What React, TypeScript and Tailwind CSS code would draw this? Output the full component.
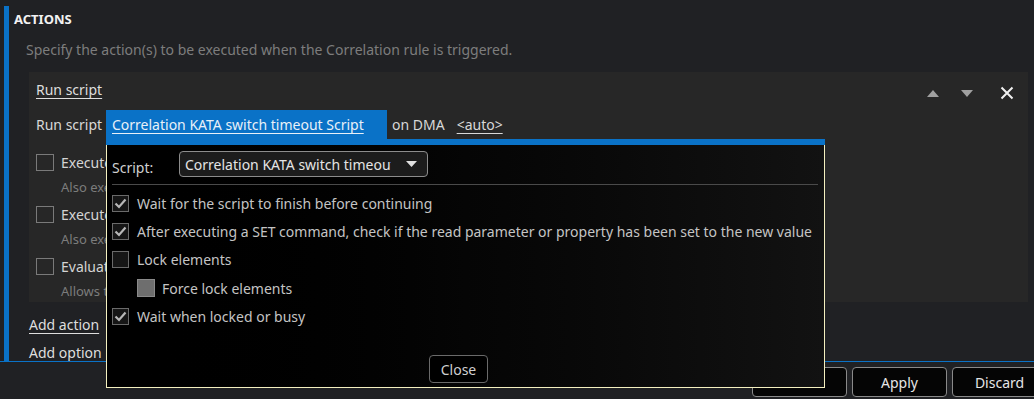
import React from "react";

const font = { fontFamily: '"Noto Sans", "Open Sans", sans-serif' };

function Check({ checked }: { checked?: boolean }) {
  return (
    <div className="w-[17px] h-[17px] border border-[#6a6a6a] bg-[#161616] flex items-center justify-center shrink-0">
      {checked && (
        <svg width="13" height="11" viewBox="0 0 13 11">
          <path d="M1.5 5.5 L5 9 L11.5 1.5" fill="none" stroke="#b8b8b8" strokeWidth="2.2" />
        </svg>
      )}
    </div>
  );
}

function CardCheck({ label, sub }: { label: string; sub: string }) {
  return (
    <div className="flex flex-col">
      <div className="flex items-center h-[17px] gap-[7px]">
        <div className="w-[18px] h-[17px] border border-[#7a7a7a] shrink-0" />
        <span className="text-[#d4d4d4] text-[14px] leading-none">{label}</span>
      </div>
      <div className="pl-[25px] mt-[10px] text-[#7c7c7c] text-[13px] leading-none">{sub}</div>
    </div>
  );
}

function Btn({ children }: { children: React.ReactNode }) {
  return (
    <div className="w-[95px] h-[30px] border border-[#8a8a8a] rounded-[4px] bg-[#050505] text-[#e6e6e6] text-[14px] flex items-center justify-center">
      {children}
    </div>
  );
}

export default function App() {
  return (
    <div className="w-[1034px] h-[399px] bg-[#202124] flex flex-col overflow-hidden" style={font}>
      <div className="h-[361px] pt-[6px] pl-[4px] shrink-0">
        <div className="h-full border-l-[5px] border-[#0a72c7] flex flex-col">
          <div className="pl-[5px] pt-[7px] text-[#f2f2f2] text-[13px] font-bold leading-none">ACTIONS</div>
          <div className="pl-[17px] mt-[17px] text-[#7d7d7d] text-[14px] leading-none">
            Specify the action(s) to be executed when the Correlation rule is triggered.
          </div>
          <div className="ml-[20px] mr-[6px] mt-[15px] h-[236px] bg-[#272727] flex flex-col px-[7px] relative">
            <div className="absolute right-[14px] top-[14px] flex items-center">
              <svg width="12" height="7" viewBox="0 0 12 7" className="mr-[22px]">
                <path d="M0 7 L6 0 L12 7 Z" fill="#a0a0a0" />
              </svg>
              <svg width="12" height="7" viewBox="0 0 12 7" className="mr-[27px]">
                <path d="M0 0 L12 0 L6 7 Z" fill="#a0a0a0" />
              </svg>
              <svg width="14" height="14" viewBox="0 0 14 14">
                <path d="M1.5 1.5 L12.5 12.5 M12.5 1.5 L1.5 12.5" stroke="#f0f0f0" strokeWidth="2" />
              </svg>
            </div>
            <div className="mt-[9px] text-[#dedede] text-[14px] underline underline-offset-[3px] leading-[17px]">Run script</div>
            <div className="mt-[12px] flex items-center h-[29px]">
              <span className="text-[#d8d8d8] text-[14px] w-[70px]">Run script</span>
              <div className="relative w-[281px] h-[29px] bg-[#0a72c7] flex items-center pl-[6px]">
                <span className="text-[#e8f0f8] text-[14px] underline underline-offset-[3px]">Correlation KATA switch timeout Script</span>
                <div className="absolute left-0 top-full w-[719px] z-30 flex flex-col">
                  <div className="h-[6px] bg-[#0a72c7]" />
                  <div className="h-[243px] border-l border-r border-b border-[#f4f0c0] bg-gradient-to-r from-[#000000] via-[#050505] to-[#121212] flex flex-col px-[5px]">
                    <div className="flex items-center mt-[6px] h-[26px]">
                      <span className="text-[#d0d0d0] text-[14px] w-[67px] mt-[6px]">Script:</span>
                      <div className="w-[249px] h-[26px] border border-[#8c8c8c] rounded-[4px] bg-[#1c1c1c] flex items-center pl-[5px] pr-[10px]">
                        <span className="text-[#e4e4e4] text-[14px] w-[206px] overflow-hidden whitespace-nowrap">Correlation KATA switch timeout Script</span>
                        <svg width="11" height="6" viewBox="0 0 11 6" className="ml-auto">
                          <path d="M0 0 L11 0 L5.5 6 Z" fill="#e0e0e0" />
                        </svg>
                      </div>
                    </div>
                    <div className="mt-[7px] h-px bg-[#4a4a4a] mr-[1px]" />
                    <div className="flex flex-col gap-[11px] mt-[10px] text-[#c4c4c4] text-[14px]">
                      <div className="flex items-center gap-[8px] h-[17px]"><Check checked /><span>Wait for the script to finish before continuing</span></div>
                      <div className="flex items-center gap-[8px] h-[17px]"><Check checked /><span>After executing a SET command, check if the read parameter or property has been set to the new value</span></div>
                      <div className="flex items-center gap-[8px] h-[17px]"><Check /><span>Lock elements</span></div>
                      <div className="flex items-center gap-[7px] h-[18px] pl-[25px]">
                        <div className="w-[18px] h-[18px] border border-[#8a8a8a] bg-[#6e6e6e]" />
                        <span>Force lock elements</span>
                      </div>
                      <div className="flex items-center gap-[8px] h-[17px]"><Check checked /><span>Wait when locked or busy</span></div>
                    </div>
                    <div className="mt-auto mb-[4px] flex justify-center pr-[14px]">
                      <div className="w-[59px] h-[28px] border border-[#6a6a6a] rounded-[4px] bg-black text-[#cfcfcf] text-[14px] flex items-center justify-center">Close</div>
                    </div>
                  </div>
                </div>
              </div>
              <span className="ml-[5px] text-[#d8d8d8] text-[14px]">on DMA</span>
              <span className="ml-[12px] text-[#d8d8d8] text-[14px] underline underline-offset-[3px]">&lt;auto&gt;</span>
            </div>
            <div className="mt-[15px] flex flex-col gap-[12px] whitespace-nowrap">
              <CardCheck label="Execute the script for each alarm" sub="Also executes the script for alarms that are added later." />
              <CardCheck label="Execute the script when the alarm is cleared" sub="Also executes the script when the alarm is cleared." />
              <CardCheck label="Evaluate the script" sub="Allows the script to be executed with the full context of the correlation event, including alarms that triggered the rule set." />
            </div>
          </div>
          <div className="ml-[20px] mt-[14px] text-[#dedede] text-[14px] underline underline-offset-[3px] leading-[17px]">Add action</div>
          <div className="ml-[20px] mt-[11px] text-[#dedede] text-[14px] leading-[17px]">Add option</div>
        </div>
      </div>
      <div className="relative z-10 h-[38px] border-t border-[#0a72c7] bg-[#202124] flex justify-end items-start pt-[5px] gap-[5px] mr-[-13px]">
        <Btn>OK</Btn>
        <Btn>Apply</Btn>
        <Btn>Discard</Btn>
      </div>
    </div>
  );
}
